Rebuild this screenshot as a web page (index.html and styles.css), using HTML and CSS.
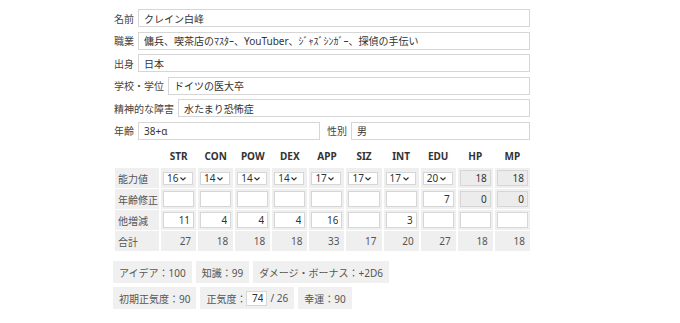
FILE: index.html
```html
<!DOCTYPE html>
<html lang="ja">
<head>
    <meta charset="UTF-8">
    <title>探索者シート</title>
    <link rel="stylesheet" href="styles.css">
</head>
<body>
    <div class="sheet">
        <!-- プロフィール -->
        <div class="field">
            <label>名前</label>
            <input type="text" value="クレイン白峰">
        </div>
        <div class="field">
            <label>職業</label>
            <input type="text" value="傭兵、喫茶店のﾏｽﾀｰ、YouTuber、ｼﾞｬｽﾞｼﾝｶﾞｰ、探偵の手伝い">
        </div>
        <div class="field">
            <label>出身</label>
            <input type="text" value="日本">
        </div>
        <div class="field">
            <label>学校・学位</label>
            <input type="text" value="ドイツの医大卒">
        </div>
        <div class="field">
            <label>精神的な障害</label>
            <input type="text" value="水たまり恐怖症">
        </div>
        <div class="field">
            <label>年齢</label>
            <input type="text" class="small" value="38+α">
            <label class="second">性別</label>
            <input type="text" value="男">
        </div>

        <!-- 能力値 -->
        <table class="stats">
            <colgroup>
                <col class="head-col">
                <col span="10">
            </colgroup>
            <thead>
                <tr>
                    <th></th>
                    <th>STR</th><th>CON</th><th>POW</th><th>DEX</th><th>APP</th>
                    <th>SIZ</th><th>INT</th><th>EDU</th><th>HP</th><th>MP</th>
                </tr>
            </thead>
            <tbody>
                <tr>
                    <td class="name">能力値</td>
                    <td><select><option>16</option></select></td>
                    <td><select><option>14</option></select></td>
                    <td><select><option>14</option></select></td>
                    <td><select><option>14</option></select></td>
                    <td><select><option>17</option></select></td>
                    <td><select><option>17</option></select></td>
                    <td><select><option>17</option></select></td>
                    <td><select><option>20</option></select></td>
                    <td><input type="text" class="num" value="18" readonly></td>
                    <td><input type="text" class="num" value="18" readonly></td>
                </tr>
                <tr>
                    <td class="name">年齢修正</td>
                    <td><input type="text" class="num" value=""></td>
                    <td><input type="text" class="num" value=""></td>
                    <td><input type="text" class="num" value=""></td>
                    <td><input type="text" class="num" value=""></td>
                    <td><input type="text" class="num" value=""></td>
                    <td><input type="text" class="num" value=""></td>
                    <td><input type="text" class="num" value=""></td>
                    <td><input type="text" class="num" value="7"></td>
                    <td><input type="text" class="num" value="0" readonly></td>
                    <td><input type="text" class="num" value="0" readonly></td>
                </tr>
                <tr>
                    <td class="name">他増減</td>
                    <td><input type="text" class="num" value="11"></td>
                    <td><input type="text" class="num" value="4"></td>
                    <td><input type="text" class="num" value="4"></td>
                    <td><input type="text" class="num" value="4"></td>
                    <td><input type="text" class="num" value="16"></td>
                    <td><input type="text" class="num" value=""></td>
                    <td><input type="text" class="num" value="3"></td>
                    <td><input type="text" class="num" value=""></td>
                    <td><input type="text" class="num" value=""></td>
                    <td><input type="text" class="num" value=""></td>
                </tr>
                <tr class="total">
                    <td class="name">合計</td>
                    <td>27</td><td>18</td><td>18</td><td>18</td><td>33</td>
                    <td>17</td><td>20</td><td>27</td><td>18</td><td>18</td>
                </tr>
            </tbody>
        </table>

        <!-- 技能値など -->
        <div class="chips first">
            <span class="chip">アイデア：100</span>
            <span class="chip">知識：99</span>
            <span class="chip">ダメージ・ボーナス：+2D6</span>
        </div>
        <div class="chips">
            <span class="chip">初期正気度：90</span>
            <span class="chip">正気度：<input type="text" class="num san" value="74"> / 26</span>
            <span class="chip">幸運：90</span>
        </div>
    </div>
</body>
</html>
```

FILE: styles.css
```css
/* ページ全体 */
body {
    margin: 0;
    font-family: "Noto Sans", "Noto Sans CJK JP", sans-serif;
    font-size: 10px;
    color: #444;
    background: #fff;
}
.sheet {
    width: 417px;
    padding: 9px 0 0 113px;
}
/* ラベルと入力欄の行 */
.field {
    display: flex;
    align-items: center;
    height: 18px;
    margin-bottom: 4.5px;
}
.field label {
    padding: 0 4px 0 1px;
    white-space: nowrap;
}
.field label.second {
    padding: 0 4px 0 7px;
}
.field input {
    flex: 1;
    min-width: 0;
}
.field input.small {
    flex: 0 0 182px;
}
input, select {
    font-family: inherit;
    font-size: 10px;
    color: #333;
    box-sizing: border-box;
    border: 1px solid #d6d6d6;
    background: #fff;
    outline: none;
}
.field input {
    height: 18px;
    padding: 0 5px;
}
/* 能力値テーブル */
.stats {
    width: 419px;
    table-layout: fixed;
    border-spacing: 2px 1px;
    margin-top: 3px;
}
.head-col {
    width: 44px;
}
.stats th {
    font-weight: bold;
    color: #333;
    height: 20px;
    text-align: center;
}
.stats td {
    background: #efefef;
    height: 20px;
    padding: 0 2px;
    white-space: nowrap;
}
.stats td.name {
    padding: 0 0 0 3px;
    color: #555;
}
.stats select {
    appearance: none;
    -webkit-appearance: none;
    width: 30px;
    height: 13px;
    padding: 0 0 0 3px;
    line-height: 11px;
    background: #fff url("data:image/svg+xml,%3Csvg xmlns='http://www.w3.org/2000/svg' width='6' height='4'%3E%3Cpath d='M0.5 0.5 L3 3 L5.5 0.5' fill='none' stroke='%23333' stroke-width='1.2'/%3E%3C/svg%3E") no-repeat right 6px center;
}
.stats input.num {
    width: 100%;
    height: 16px;
    padding: 0 3px;
}
input.num {
    text-align: right;
}
input[readonly] {
    background: #ececec;
}
.stats tr.total td {
    text-align: right;
    padding-right: 5px;
    color: #555;
}
.stats tr.total td.name {
    text-align: left;
}
/* 下段のチップ */
.chips {
    display: flex;
    gap: 4px;
    margin-top: 4px;
}
.chips.first {
    margin-top: 9px;
}
.chip {
    display: flex;
    align-items: center;
    height: 22px;
    padding: 0 6px;
    background: #f0f0f0;
    color: #555;
}
.chip input.san {
    width: 21px;
    height: 15px;
    padding: 0 3px;
    margin-right: 3px;
}
```
